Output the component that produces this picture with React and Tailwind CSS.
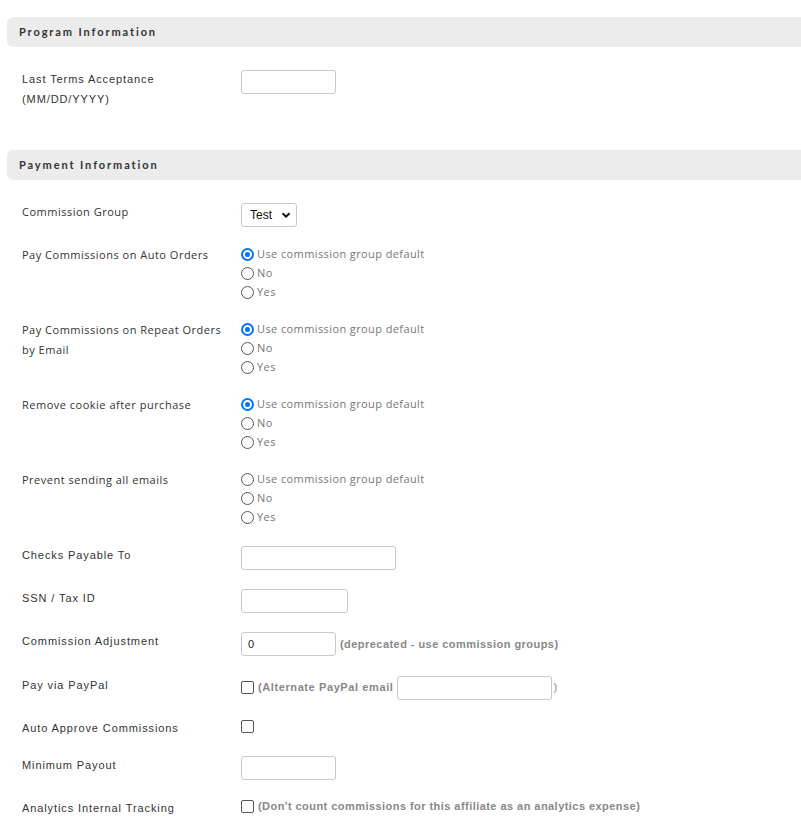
function Header({ children }) {
  return (
    <div className="h-[30px] rounded-l-[6px] bg-[#ececec] pl-3 flex items-center text-[11px] font-bold tracking-[1.9px] text-[#333] font-['Lato','Liberation_Sans',sans-serif]">
      {children}
    </div>
  )
}

function Label({ children, open }) {
  return (
    <div
      className={`w-[219px] shrink-0 text-[11px] leading-[20px] text-[#333] ${
        open ? "font-['Open_Sans',sans-serif] tracking-[0.5px]" : "font-['Liberation_Sans',Arial,sans-serif] tracking-[0.9px]"
      }`}
    >
      {children}
    </div>
  )
}

function TextInput({ width, value }) {
  return (
    <div
      className={`mt-px h-[24px] ${width} rounded-[3px] border border-[#c9c9c9] bg-white px-[6px] flex items-center text-[11px] text-[#222] font-['Liberation_Sans',Arial,sans-serif]`}
    >
      {value}
    </div>
  )
}

function Radio({ checked }) {
  if (checked) {
    return (
      <span className="w-[13px] h-[13px] rounded-full bg-[#0075ff] flex items-center justify-center shrink-0">
        <span className="w-[9px] h-[9px] rounded-full border-2 border-white bg-[#0075ff]" />
      </span>
    )
  }
  return <span className="w-[13px] h-[13px] rounded-full border border-[#555] bg-white shrink-0" />
}

function Checkbox() {
  return <span className="w-[13px] h-[13px] rounded-[2px] border border-[#555] bg-white shrink-0" />
}

function RadioGroup({ selected }) {
  const options = ['Use commission group default', 'No', 'Yes']
  return (
    <div className="flex flex-col">
      {options.map((opt, i) => (
        <div key={opt} className="h-[19px] flex items-center gap-[3px] text-[11px] text-[#777] tracking-[0.4px] font-['Open_Sans',sans-serif]">
          <Radio checked={selected === i} />
          <span>{opt}</span>
        </div>
      ))}
    </div>
  )
}

const helpCls = "text-[11px] font-bold text-[#888] tracking-[0.45px] font-['Liberation_Sans',Arial,sans-serif]"

export default function App() {
  return (
    <div className="w-[801px] bg-white pl-[7px] pt-[17px] pb-10 overflow-hidden">
      <Header>Program Information</Header>
      <div className="pl-[15px] pt-[22px]">
        <div className="flex items-start">
          <Label>
            Last Terms Acceptance
            <br />
            (MM/DD/YYYY)
          </Label>
          <TextInput width="w-[95px]" />
        </div>
      </div>

      <div className="mt-[41px]">
        <Header>Payment Information</Header>
      </div>
      <div className="pl-[15px] pt-[22px] flex flex-col gap-[18px]">
        <div className="flex items-start">
          <Label open>Commission Group</Label>
          <div className="mt-px h-[24px] w-[56px] rounded-[3px] border border-[#c9c9c9] bg-white pl-[8px] pr-[5px] flex items-center justify-between text-[12px] text-[#111] font-['Liberation_Sans',Arial,sans-serif]">
            <span>Test</span>
            <svg width="10" height="8" viewBox="0 0 10 8" fill="none">
              <path d="M1.5 2.2 L5 5.6 L8.5 2.2" stroke="#111" strokeWidth="2" />
            </svg>
          </div>
        </div>

        <div className="flex items-start">
          <Label open>Pay Commissions on Auto Orders</Label>
          <RadioGroup selected={0} />
        </div>

        <div className="flex items-start">
          <Label open>
            Pay Commissions on Repeat Orders
            <br />
            by Email
          </Label>
          <RadioGroup selected={0} />
        </div>

        <div className="flex items-start">
          <Label open>Remove cookie after purchase</Label>
          <RadioGroup selected={0} />
        </div>

        <div className="flex items-start">
          <Label open>Prevent sending all emails</Label>
          <RadioGroup selected={-1} />
        </div>

        <div className="flex items-start">
          <Label>Checks Payable To</Label>
          <TextInput width="w-[155px]" />
        </div>

        <div className="flex items-start">
          <Label>SSN / Tax ID</Label>
          <TextInput width="w-[107px]" />
        </div>

        <div className="flex items-start">
          <Label>Commission Adjustment</Label>
          <TextInput width="w-[95px]" value="0" />
          <span className={`${helpCls} ml-[4px] leading-[26px]`}>(deprecated - use commission groups)</span>
        </div>

        <div className="flex items-start">
          <Label>Pay via PayPal</Label>
          <div className="flex items-center h-[25px] gap-[4px]">
            <Checkbox />
            <span className="text-[11px] font-bold text-[#888] tracking-[0.6px] font-['Liberation_Sans',Arial,sans-serif]">
              (Alternate PayPal email
            </span>
            <div className="h-[24px] w-[155px] rounded-[3px] border border-[#c9c9c9] bg-white" />
            <span className="text-[11px] text-[#888] -ml-[3px] font-['Liberation_Sans',Arial,sans-serif]">)</span>
          </div>
        </div>

        <div className="flex items-start -mb-px">
          <Label>Auto Approve Commissions</Label>
          <div className="h-[16px] flex items-center">
            <Checkbox />
          </div>
        </div>

        <div className="flex items-start">
          <Label>Minimum Payout</Label>
          <TextInput width="w-[95px]" />
        </div>

        <div className="flex items-start">
          <Label>Analytics Internal Tracking</Label>
          <div className="h-[17px] flex items-center gap-[4px]">
            <Checkbox />
            <span className={helpCls}>(Don't count commissions for this affiliate as an analytics expense)</span>
          </div>
        </div>
      </div>
    </div>
  )
}
